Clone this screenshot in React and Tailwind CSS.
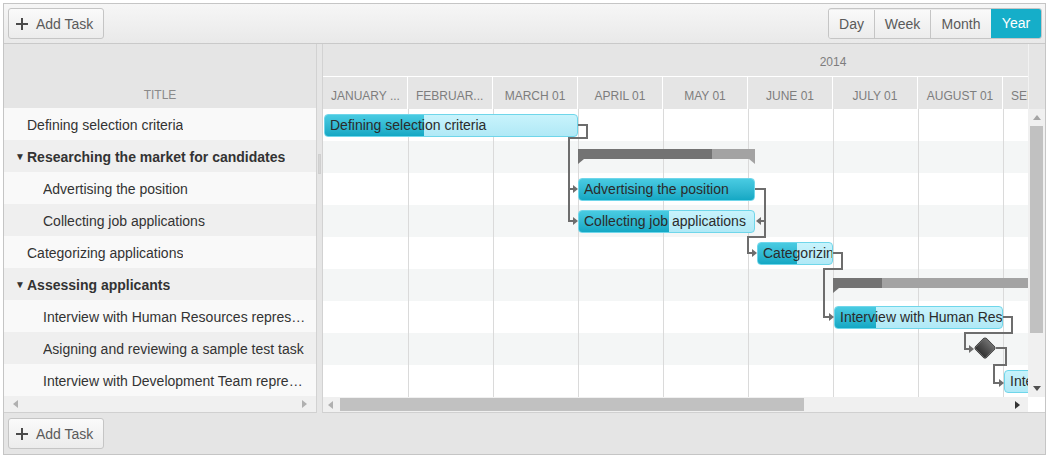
import React from 'react';

const font = "font-['Liberation_Sans',Arial,sans-serif]";

const treeRows = [
  { title: "Defining selection criteria", level: 0 },
  { title: "Researching the market for candidates", level: 0, summary: true },
  { title: "Advertising the position", level: 1 },
  { title: "Collecting job applications", level: 1 },
  { title: "Categorizing applications", level: 0 },
  { title: "Assessing applicants", level: 0, summary: true },
  { title: "Interview with Human Resources representative", level: 1 },
  { title: "Asigning and reviewing a sample test task", level: 1 },
  { title: "Interview with Development Team representative", level: 1 },
];

const months = ["JANUARY ...", "FEBRUAR...", "MARCH 01", "APRIL 01", "MAY 01", "JUNE 01", "JULY 01", "AUGUST 01", "SEPTEMBER 01"];

const tasks = [
  { title: "Defining selection criteria", left: 1, top: 5, width: 254, done: 99 },
  { title: "Advertising the position", left: 255, top: 69, width: 177, done: 177 },
  { title: "Collecting job applications", left: 255, top: 101, width: 177, done: 90 },
  { title: "Categorizing applications", left: 434, top: 133, width: 76, done: 39 },
  { title: "Interview with Human Resources representative", left: 511, top: 197, width: 169, done: 41 },
  { title: "Interview with Development Team representative", left: 681, top: 261, width: 110, done: 0 },
];

const summaries = [
  { left: 255, top: 40, width: 177, done: 134 },
  { left: 510, top: 169, width: 240, done: 49 },
];

const lines = [
  "255,16 264,16 264,29 246,29 246,112 251,112",
  "246,80 251,80",
  "432,80 442,80 442,128 425,128 425,144 430,144",
  "442,112 438,112",
  "510,144 519,144 519,160 501,160 501,208 506,208",
  "680,208 689,208 689,224 642,224 642,240 647,240",
  "673,239 683,239 683,256 671,256 671,274 676,274",
];

// arrow tips, dir 1 = right, -1 = left
const arrows = [
  [255, 80, 1], [255, 112, 1], [434, 144, 1], [433, 112, -1], [511, 208, 1], [651, 240, 1], [681, 274, 1],
];

function PlusIcon() {
  return (
    <svg width="12" height="12" viewBox="0 0 12 12">
      <rect x="5" y="0" width="2" height="12" fill="#4a4a4a" />
      <rect x="0" y="5" width="12" height="2" fill="#4a4a4a" />
    </svg>
  );
}

function AddTaskButton() {
  return (
    <button className="flex items-center gap-[8px] h-[31px] w-[96px] pl-[7px] pt-[1px] rounded-[3px] border border-[#c5c5c5] bg-linear-to-b from-[#fafafa] to-[#ececec] text-[14px] text-[#5a5a5a]">
      <PlusIcon />
      <span>Add Task</span>
    </button>
  );
}

function Tri({ dir, color = "#9a9a9a" }) {
  const pts = {
    up: "0,5 8,5 4,0",
    down: "0,0 8,0 4,5",
    left: "5,0 5,8 0,4",
    right: "0,0 0,8 5,4",
  }[dir];
  const w = dir === "up" || dir === "down" ? 8 : 5;
  const h = dir === "up" || dir === "down" ? 5 : 8;
  return (
    <svg width={w} height={h} viewBox={`0 0 ${w} ${h}`}>
      <polygon points={pts} fill={color} />
    </svg>
  );
}

function TaskBar({ t }) {
  return (
    <div
      className="absolute h-[23px] rounded-[4px] border border-[#6fd6ea] bg-linear-to-b from-[#c8f3fc] to-[#b0e9f6] overflow-hidden"
      style={{ left: t.left, top: t.top, width: t.width }}
    >
      <div className="absolute left-0 top-0 bottom-0 bg-linear-to-b from-[#48cbe2] to-[#13a8c4]" style={{ width: t.done }} />
      <div className="relative whitespace-nowrap pl-[5px] text-[14px] leading-[21px] text-[#2b2b2b]">{t.title}</div>
    </div>
  );
}

function SummaryBar({ s }) {
  return (
    <div className="absolute h-[15px]" style={{ left: s.left, top: s.top, width: s.width }}>
      <div className="relative h-[10px] bg-[#a3a3a3]">
        <div className="absolute left-0 top-0 bottom-0 bg-[#737373]" style={{ width: s.done }} />
      </div>
      <svg className="absolute left-0 top-[10px]" width="6" height="5" viewBox="0 0 6 5">
        <polygon points="0,0 6,0 0,5" fill="#737373" />
      </svg>
      <svg className="absolute right-0 top-[10px]" width="6" height="5" viewBox="0 0 6 5">
        <polygon points="0,0 6,0 6,5" fill="#a3a3a3" />
      </svg>
    </div>
  );
}

const viewBtn = "flex items-center justify-center bg-linear-to-b from-[#fafafa] to-[#ececec]";

export default function App() {
  return (
    <div className={`w-[1049px] h-[458px] p-[3px] bg-white ${font}`}>
      <div className="flex flex-col h-full border border-[#c5c5c5]">
        {/* toolbar */}
        <div className="flex items-start justify-between h-[40px] pt-[4px] pl-[4px] pr-[3px] border-b border-[#c9c9c9] bg-linear-to-b from-[#f6f6f6] to-[#e9e9e9]">
          <AddTaskButton />
          <div className="flex h-[31px] pt-[1px] rounded-[3px] border border-[#c5c5c5] overflow-hidden text-[14px] text-[#5a5a5a] bg-[#ececec]">
            <div className={`${viewBtn} w-[45px]`}>Day</div>
            <div className={`${viewBtn} w-[56px] border-l border-[#c5c5c5]`}>Week</div>
            <div className={`${viewBtn} w-[61px] border-l border-[#c5c5c5]`}>Month</div>
            <div className="flex items-center justify-center w-[50px] -mt-[1px] bg-[#15aec9] text-white">Year</div>
          </div>
        </div>

        {/* body */}
        <div className="flex flex-1 min-h-0">
          {/* tree list */}
          <div className="flex flex-col w-[312px] shrink-0">
            <div className="flex items-end justify-center h-[65px] bg-[#e5e5e5] pb-[4px] text-[12px] text-[#8a8a8a]">TITLE</div>
            <div className="flex flex-col">
              {treeRows.map((r, i) => (
                <div
                  key={i}
                  className={`flex items-center h-[32px] pt-[2px] pr-[7px] text-[14px] text-[#333] ${i % 2 ? "bg-[#efefef]" : "bg-[#f9f9f9]"} ${r.level ? "pl-[39px]" : r.summary ? "pl-[11px]" : "pl-[23px]"}`}
                >
                  {r.summary && <span className="w-[12px] text-[10px] leading-none text-[#333]">▼</span>}
                  <span className={`truncate ${r.summary ? "font-bold" : ""}`}>{r.title}</span>
                </div>
              ))}
            </div>
            <div className="flex items-center justify-between h-[17px] px-[9px] bg-[#f0f0f0] border-b border-[#d0d0d0]">
              <Tri dir="left" color="#b0b0b0" />
              <Tri dir="right" color="#b0b0b0" />
            </div>
          </div>

          {/* splitter */}
          <div className="flex flex-col w-[7px] shrink-0 border-x border-[#d2d2d2] bg-[#e6e6e6]">
            <div className="h-[110px]" />
            <div className="mx-auto w-[3px] h-[20px] bg-[#d6d6d6] border border-[#cfcfcf]" />
          </div>

          {/* gantt */}
          <div className="flex flex-col w-[722px] shrink-0">
            <div className="flex h-[65px] bg-[#e5e5e5]">
              <div className="flex flex-col w-[705px] overflow-hidden">
                <div className="w-[1020px] h-[32px] pt-[2px] leading-[32px] text-center text-[12px] text-[#7d7d7d]">2014</div>
                <div className="flex h-[33px] border-t border-white">
                  {months.map((m, i) => (
                    <div
                      key={i}
                      className={`w-[85px] shrink-0 pt-[3px] whitespace-nowrap overflow-hidden border-r border-white text-[12px] leading-[32px] text-[#7d7d7d] ${i < 2 || i === 8 ? "text-left pl-[8px]" : "text-center"}`}
                    >
                      {m}
                    </div>
                  ))}
                </div>
              </div>
              <div className="w-[17px] border-l border-[#f2f2f2] bg-[#e5e5e5]" />
            </div>

            <div className="flex h-[288px]">
              {/* timeline canvas */}
              <div className="relative w-[705px] h-[288px] overflow-hidden">
                {treeRows.map((r, i) => (
                  <div key={i} className={`h-[32px] ${i % 2 ? "bg-[#f4f6f6]" : "bg-white"}`} />
                ))}
                <div className="absolute inset-0 flex">
                  {months.map((m, i) => (
                    <div key={i} className={`w-[85px] shrink-0 ${i ? "border-l border-[#dadada]" : ""}`} />
                  ))}
                </div>
                {summaries.map((s, i) => (
                  <SummaryBar key={i} s={s} />
                ))}
                {tasks.map((t, i) => (
                  <TaskBar key={i} t={t} />
                ))}
                <div className="absolute left-[654px] top-[231px] w-[16px] h-[16px] rotate-45 rounded-[2px] border border-[#2d2d2d] bg-linear-to-b from-[#6e6e6e] to-[#333]" />
                <svg className="absolute inset-0 pointer-events-none" width="705" height="288">
                  {lines.map((p, i) => (
                    <polyline key={i} points={p} fill="none" stroke="#6d6d6d" strokeWidth="2" />
                  ))}
                  {arrows.map(([x, y, d], i) => (
                    <polygon key={i} points={`${x},${y} ${x - 5 * d},${y - 4} ${x - 5 * d},${y + 4}`} fill="#6d6d6d" />
                  ))}
                </svg>
              </div>
              {/* vertical scrollbar */}
              <div className="flex flex-col items-center w-[17px] bg-[#f0f0f0]">
                <div className="h-[17px] flex items-center justify-center">
                  <Tri dir="up" color="#a5a5a5" />
                </div>
                <div className="w-[13px] h-[207px] bg-[#c1c1c1]" />
                <div className="flex-1" />
                <div className="h-[17px] flex items-center justify-center">
                  <Tri dir="down" color="#505050" />
                </div>
              </div>
            </div>

            <div className="flex h-[17px] border-b border-[#d0d0d0]">
              <div className="flex items-center w-[705px] bg-[#f0f0f0] pl-[5px] pr-[8px]">
                <Tri dir="left" color="#b0b0b0" />
                <div className="ml-[7px] w-[464px] h-[13px] bg-[#c1c1c1]" />
                <div className="flex-1" />
                <Tri dir="right" color="#333" />
              </div>
              <div className="w-[17px] bg-white" />
            </div>
          </div>
        </div>

        {/* footer */}
        <div className="h-[41px] pt-[5px] pl-[4px] bg-[#e5e5e5]">
          <AddTaskButton />
        </div>
      </div>
    </div>
  );
}
